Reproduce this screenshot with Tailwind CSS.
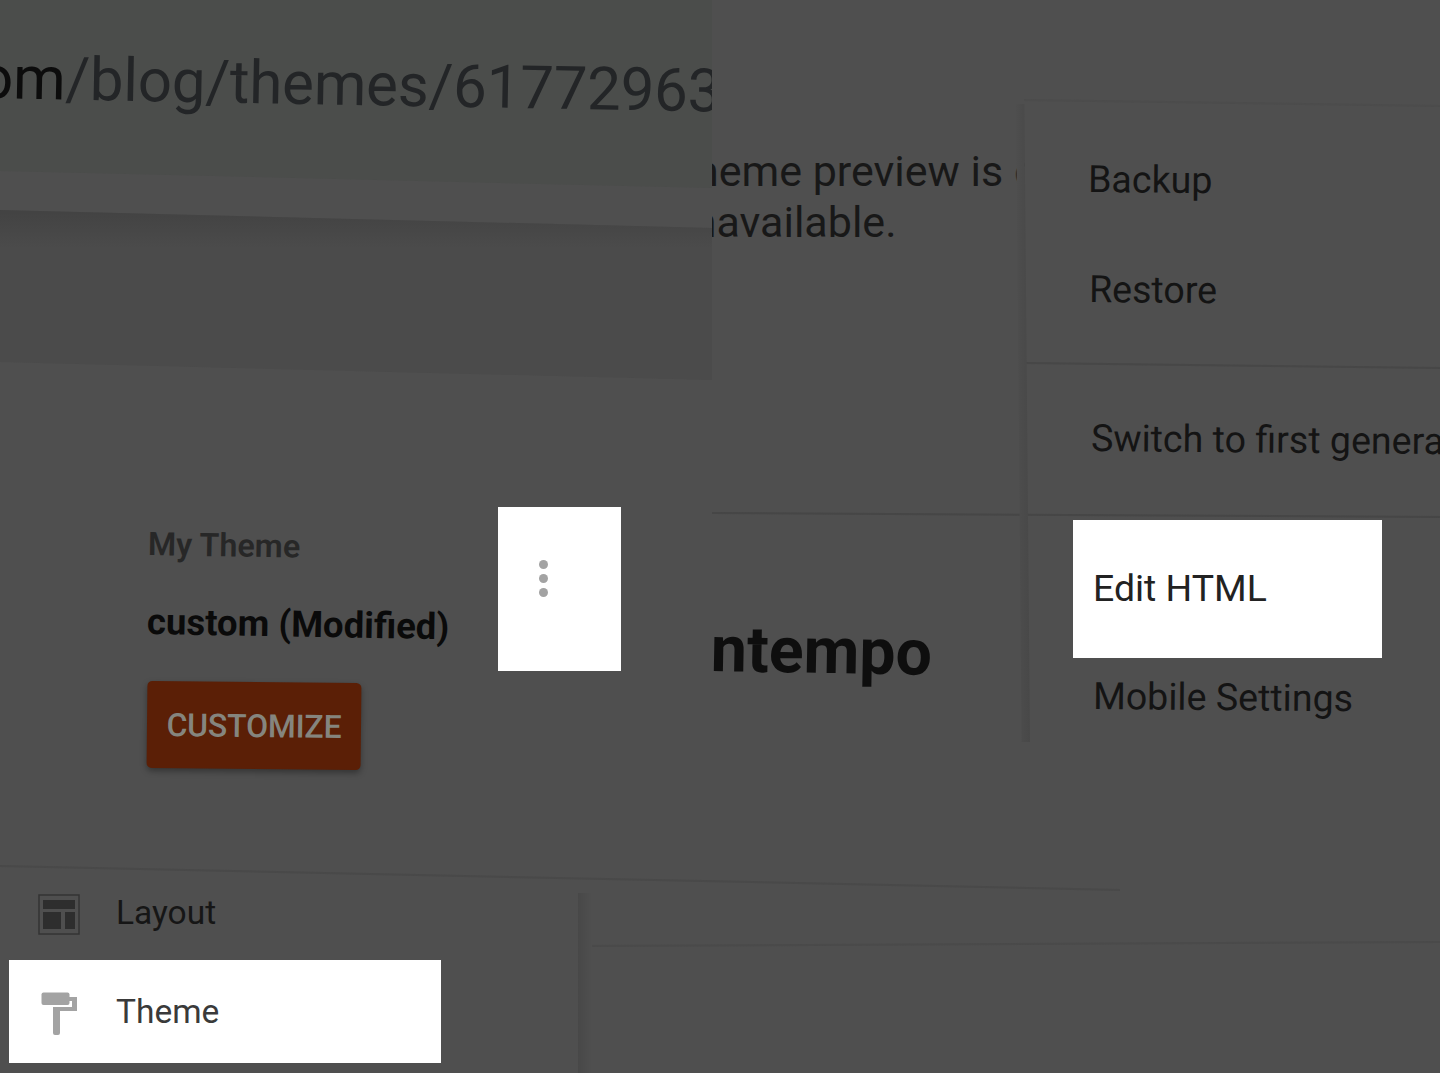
<!DOCTYPE html>
<html lang="en">
<head>
<meta charset="utf-8">
<script src="https://cdn.jsdelivr.net/npm/@tailwindcss/browser@4"></script>
<title>Theme</title>
</head>
<body class="m-0 bg-[#4f4f4f]">
<main class="relative w-[1440px] h-[1073px] overflow-hidden bg-[#4f4f4f] font-['Roboto',sans-serif]">

  <!-- browser/address strip with its skewed edges -->
  <div class="absolute left-0 top-0 w-[712px] h-[380px] bg-[#4b4b4b] [clip-path:polygon(0_0,100%_0,100%_100%,0_362px)]"></div>
  <div class="absolute left-0 top-0 w-[712px] h-[240px] bg-[#4f4f4f] [clip-path:polygon(0_0,100%_0,100%_228px,0_210px)]"></div>
  <div class="absolute left-0 top-[208px] w-[712px] h-[40px] bg-gradient-to-b from-[#424242] to-transparent [clip-path:polygon(0_2px,100%_20px,100%_100%,0_100%)]"></div>
  <div class="absolute left-0 top-0 w-[712px] h-[190px] bg-[#4b4d4b] [clip-path:polygon(0_0,100%_0,100%_188px,0_171px)]"></div>
  <div class="absolute left-0 top-0 w-[712px] h-[190px] overflow-hidden">
    <p class="absolute left-[-21px] top-[43px] whitespace-nowrap origin-left rotate-[1.05deg] text-[60px] leading-[70px] tracking-[-0.2px] text-[#232527]"><span class="text-[#0c0c0c]">om</span>/blog/themes/61772963</p>
  </div>

  <!-- theme preview message -->
  <div class="absolute left-[712px] top-[140px] w-[313px] h-[120px] overflow-hidden text-[43px] leading-[50px] text-[#181818]">
    <p class="absolute left-[-17px] top-[6px] whitespace-nowrap">heme preview is c</p>
    <p class="absolute left-[-43px] top-[57px] whitespace-nowrap">unavailable.</p>
  </div>

  <!-- divider lines -->
  <svg class="absolute inset-0 pointer-events-none" width="1440" height="1073" viewBox="0 0 1440 1073" fill="none">
    <path d="M712 513L1440 517" stroke="#464646" stroke-width="2"/>
    <path d="M1026 363L1440 368" stroke="#474747" stroke-width="2"/>
    <path d="M0 866L1120 890" stroke="#494949" stroke-width="2"/>
    <path d="M580 946L1440 942" stroke="#4a4a4a" stroke-width="2"/>
    <path d="M1024 100L1440 106" stroke="#4c4c4c" stroke-width="2"/>
  </svg>

  <!-- menu's shadow -->
  <div class="absolute left-[1016px] top-[104px] w-[14px] h-[638px] bg-gradient-to-r from-[#4e4e4e] to-[#484848] [clip-path:polygon(0_0,60%_0,100%_100%,40%_100%)]"></div>
  <div class="absolute left-[578px] top-[893px] w-[14px] h-[180px] bg-gradient-to-r from-[#484848] to-[#4f4f4f]"></div>

  <!-- theme card -->
  <p class="absolute left-[148px] top-[524px] whitespace-nowrap origin-left rotate-[1deg] text-[32.3px] leading-[40px] font-semibold text-[#272727]">My Theme</p>
  <p class="absolute left-[147px] top-[600px] whitespace-nowrap origin-left rotate-[1deg] text-[36.5px] leading-[44px] font-bold text-[#0a0a0a]">custom (Modified)</p>
  <div class="absolute left-[147px] top-[682px] w-[214px] h-[87px] rounded-[5px] rotate-[0.6deg] bg-[#5b1f06] shadow-[0_3px_6px_rgba(0,0,0,0.35)] flex items-center justify-center">
    <span class="text-[32px] leading-none font-medium text-[#85857e] tracking-[-0.2px]">CUSTOMIZE</span>
  </div>
  <div class="absolute left-[498px] top-[507px] w-[123px] h-[164px] bg-white flex flex-col gap-[5px] pt-[53px] pl-[41px]">
    <span class="block w-[9px] h-[9px] rounded-full bg-[#a3a3a3]"></span>
    <span class="block w-[9px] h-[9px] rounded-full bg-[#a3a3a3]"></span>
    <span class="block w-[9px] h-[9px] rounded-full bg-[#a3a3a3]"></span>
  </div>

  <!-- next theme's name -->
  <div class="absolute left-[712px] top-[610px] w-[260px] h-[90px] overflow-hidden">
    <p class="absolute left-[-1px] top-[4px] whitespace-nowrap origin-left rotate-[1deg] text-[64.4px] leading-[70px] font-bold text-[#0e0e0e]">ntempo</p>
  </div>

  <!-- overflow menu -->
  <p class="absolute left-[1088px] top-[157px] whitespace-nowrap text-[37.6px] leading-[44px] text-[#141414] origin-left rotate-[0.5deg]">Backup</p>
  <p class="absolute left-[1089px] top-[267px] whitespace-nowrap text-[37.6px] leading-[44px] text-[#141414] origin-left rotate-[0.5deg]">Restore</p>
  <p class="absolute left-[1091px] top-[416px] whitespace-nowrap text-[37.6px] leading-[44px] text-[#141414] origin-left rotate-[0.5deg]">Switch to first generation</p>
  <div class="absolute left-[1073px] top-[520px] w-[309px] h-[138px] bg-white flex items-center pl-[20px]">
    <span class="text-[37.4px] leading-[44px] text-[#222] -mt-[2px]">Edit HTML</span>
  </div>
  <p class="absolute left-[1093px] top-[674px] whitespace-nowrap text-[37.6px] leading-[44px] text-[#141414] origin-left rotate-[0.5deg]">Mobile Settings</p>

  <!-- sidebar -->
  <svg class="absolute left-[38px] top-[894px]" width="42" height="41" viewBox="0 0 42 41" fill="none">
    <rect x="1" y="1" width="40" height="39" stroke="#343434" stroke-width="1.5"/>
    <rect x="5" y="6" width="32" height="9" fill="#2e2e2e"/>
    <rect x="5" y="18" width="18" height="17" fill="#2e2e2e"/>
    <rect x="27" y="18" width="10" height="17" fill="#2e2e2e"/>
  </svg>
  <p class="absolute left-[116px] top-[892px] whitespace-nowrap text-[33.5px] leading-[42px] text-[#161616]">Layout</p>
  <div class="absolute left-[9px] top-[960px] w-[432px] h-[103px] bg-white flex items-center pl-[107px]">
    <span class="text-[33.5px] leading-[42px] text-[#3a3a3a]">Theme</span>
  </div>
  <svg class="absolute left-[40px] top-[991px]" width="40" height="45" viewBox="0 0 40 45" fill="none">
    <path d="M29 6H37V20H20V42a2 2 0 0 1-2 2h-3a2 2 0 0 1-2-2V16H32V10H29Z" fill="#a3a3a3"/>
    <rect x="1.5" y="1.5" width="28" height="12.5" rx="2" fill="#a3a3a3"/>
  </svg>
</main>
</body>
</html>
